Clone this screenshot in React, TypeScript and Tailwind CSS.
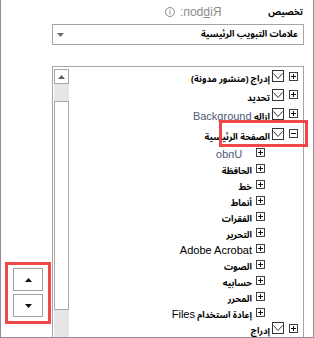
import type { ReactNode } from "react";

const PlusBox = ({ minus = false }: { minus?: boolean }) => (
  <svg width="9" height="9" viewBox="0 0 9 9" className="shrink-0">
    <rect x="0.5" y="0.5" width="8" height="8" fill="white" stroke="#404040" />
    <path d="M2 4.5h5" stroke="#111" />
    {!minus && <path d="M4.5 2v5" stroke="#111" />}
  </svg>
);

const CheckBox = () => (
  <svg width="12" height="12" viewBox="0 0 12 12" className="shrink-0">
    <rect x="0.5" y="0.5" width="11" height="11" fill="white" stroke="#333" />
    <path d="M1.5 3.5 L6 8.5 L10.5 3.5" fill="none" stroke="#333" />
  </svg>
);

const InfoIcon = () => (
  <svg width="10" height="10" viewBox="0 0 10 10">
    <circle cx="5" cy="5" r="4.5" fill="none" stroke="#8c8c8c" />
    <path d="M5 4.2v3.3" stroke="#8c8c8c" />
    <rect x="4.5" y="2.3" width="1" height="1" fill="#8c8c8c" />
  </svg>
);

const Triangle = ({ up = false, color = "#111" }: { up?: boolean; color?: string }) => (
  <svg width="7" height="4" viewBox="0 0 7 4">
    <path d={up ? "M0 4h7L3.5 0z" : "M0 0h7L3.5 4z"} fill={color} />
  </svg>
);

const TopRow = ({ children, minus = false, h = "h-[19px]" }: { children: ReactNode; minus?: boolean; h?: string }) => (
  <div className={`flex ${h} shrink-0 items-center justify-end pr-[5px]`}>
    <span dir="rtl" className="mr-[2px] whitespace-nowrap leading-none">{children}</span>
    <CheckBox />
    <span className="ml-[5px]">
      <PlusBox minus={minus} />
    </span>
  </div>
);

const ChildRow = ({ children, gap = "mr-[4px]" }: { children: ReactNode; gap?: string }) => (
  <div className="flex h-4 shrink-0 items-center justify-end pr-[38px]">
    <span dir="rtl" className={`${gap} whitespace-nowrap leading-none`}>{children}</span>
    <PlusBox />
  </div>
);

const ar = "font-['Noto_Sans_Arabic','DejaVu_Sans_Condensed','DejaVu_Sans',sans-serif] font-bold text-[9px] leading-none";
const lat = "font-['Liberation_Sans',sans-serif] text-[11px] leading-none";

const children = ["الحافظة", "خط", "أنماط", "الفقرات", "التحرير"];
const children2 = ["الصوت", "حسابيه", "المحرر"];

export default function App() {
  return (
    <div className="relative flex h-[338px] w-[314px] flex-col overflow-hidden border-x border-b border-[#978a9a] bg-white text-black">
      <div className="flex h-6 shrink-0 items-center justify-end pr-[10px]">
        <div className={`flex items-center gap-[5px] text-[#8c8c8c] ${lat} text-[12px]`}>
          <InfoIcon />
          <span className="inline-block -scale-x-100">
            Ri<span className="underline">b</span>bon:
          </span>
        </div>
        <div dir="rtl" className={`w-[82px] ${ar} text-[9.5px]`}>
          تخصيص
        </div>
      </div>

      <div className="ml-[51px] flex h-[21px] w-[252px] shrink-0 items-center justify-between border border-[#a5a5a5] pl-[4px] pr-[5px]">
        <Triangle color="#6b6b6b" />
        <span dir="rtl" className={`${ar} text-[8.5px]`}>
          علامات التبويب الرئيسية
        </span>
      </div>

      <div className="mt-[21px] flex min-h-0 flex-1">
        <div className="w-[51px] shrink-0 pl-[4px] pt-[196px]">
          <div className="flex w-[46px] flex-col gap-[3px] border-[3px] border-[#f04848] px-[5px] pb-[4px] pt-[3px]">
            <div className="flex h-[23px] w-[30px] items-center justify-center border border-[#a0a0a0]">
              <Triangle up />
            </div>
            <div className="flex h-[23px] w-[30px] items-center justify-center border border-[#a0a0a0]">
              <Triangle />
            </div>
          </div>
        </div>

        <div className="flex h-[300px] w-[252px] shrink-0 border border-[#a5a5a5]">
          <div className="ml-px mt-[2px] flex w-[15px] flex-col">
            <div className="flex h-[15px] shrink-0 items-center justify-center border border-[#a8a8a8]">
              <Triangle up color="#606060" />
            </div>
            <div className="h-[17px] shrink-0 bg-[#e6e6e6]" />
            <div className="h-[209px] shrink-0 border border-[#a8a8a8] bg-white" />
            <div className="flex-1 bg-[#e6e6e6]" />
          </div>

          <div className="flex flex-1 flex-col">
            <TopRow h="h-[18px]">
              <span className={ar}>إدراج (منشور مدونة)</span>
            </TopRow>
            <TopRow>
              <span className={ar}>تحديد</span>
            </TopRow>
            <TopRow>
              <span className={ar}>ازاله </span>
              <span dir="ltr" className={`${lat} text-[10px] text-[#4f5878]`}>Background</span>
            </TopRow>
            <TopRow minus h="h-[21px]">
              <span className={ar}>الصفحة الرئيسية</span>
            </TopRow>
            <ChildRow gap="mr-[14px]">
              <span className={`inline-block -scale-x-100 ${lat} text-[10px] text-[#4f5878]`}>Undo</span>
            </ChildRow>
            {children.map((c) => (
              <ChildRow key={c}>
                <span className={ar}>{c}</span>
              </ChildRow>
            ))}
            <ChildRow>
              <span dir="ltr" className={lat}>Adobe Acrobat</span>
            </ChildRow>
            {children2.map((c) => (
              <ChildRow key={c}>
                <span className={ar}>{c}</span>
              </ChildRow>
            ))}
            <ChildRow>
              <span className={ar}>إعادة استخدام </span>
              <span dir="ltr" className={lat}>Files</span>
            </ChildRow>
            <TopRow h="h-4">
              <span className={ar}>إدراج</span>
            </TopRow>
          </div>
        </div>
      </div>

      <div className="absolute left-[218px] top-[120px] h-[27px] w-[89px] border-[3px] border-[#f04848]" />
    </div>
  );
}
